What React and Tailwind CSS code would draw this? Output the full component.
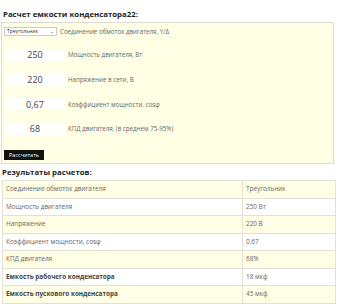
import React, { useState } from 'react';

const rows = [
  ['Соединение обмоток двигателя', 'Треугольник'],
  ['Мощность двигателя', '250 Вт'],
  ['Напряжение', '220 В'],
  ['Коэффициент мощности, cosφ', '0.67'],
  ['КПД двигателя', '68%'],
  ['Емкость рабочего конденсатора', '18 мкф', true],
  ['Емкость пускового конденсатора', '45 мкф', true],
];

const fields = [
  ['250', 'Мощность двигателя, Вт'],
  ['220', 'Напряжение в сети, В'],
  ['0,67', 'Коэффициент мощности, cosφ'],
  ['68', 'КПД двигателя, (в среднем 75-95%)'],
];

export default function App() {
  const [conn, setConn] = useState('Треугольник');

  return (
    <div className="w-[350px] h-[308px] bg-white text-[#333] overflow-hidden" style={{ fontFamily: '"Open Sans", sans-serif' }}>
      <h2 className="pl-[3px] pt-[9px] h-[22px] text-[7.8px] font-bold leading-[10px] text-[#222]">
        Расчет емкости конденсатора22:
      </h2>

      {/* form */}
      <div className="ml-[1px] w-[333px] h-[142px] bg-[#ffffe6] border border-[#dcdcd0] pl-[2px] pt-[4px]">
        <div className="flex items-center gap-[3px] h-[9px]">
          <div className="w-[53px] h-[9px] bg-white border border-[#ccc] flex items-center justify-between px-[2px] text-[5px] text-[#333]">
            <span>{conn}</span>
            <span className="text-[5px] leading-[5px]">⌄</span>
          </div>
          <span className="text-[6.2px] text-[#666]">Соединение обмоток двигателя, Y/Δ</span>
        </div>

        <div className="mt-[13px] flex flex-col gap-[12.7px]">
          {fields.map(([v, l]) => (
            <div key={l} className="flex items-center gap-[3px] h-[12px]">
              <div className="ml-[1px] w-[60px] h-[12px] bg-white flex items-center justify-center text-[9px] text-[#444]">{v}</div>
              <span className="text-[6.2px] text-[#666]">{l}</span>
            </div>
          ))}
        </div>

        <button
          onClick={() => setConn(conn)}
          className="mt-[15px] h-[10px] w-[40px] bg-[#111] text-white text-[5.5px] flex items-center justify-center"
        >
          Рассчитать
        </button>
      </div>

      <h3 className="pl-[2px] pt-[3px] h-[16px] text-[7.8px] font-bold leading-[10px] text-[#222]">
        Результаты расчетов:
      </h3>

      {/* results */}
      <table className="ml-[2px] w-[334px] border-collapse text-[6.4px] text-[#666]">
        <tbody>
          {rows.map(([a, b, bold], i) => (
            <tr key={a} className={`h-[17.5px] ${i % 2 === 0 ? 'bg-[#ffffe6]' : 'bg-white'}`}>
              <td className={`border border-[#e2e2d4] pl-[3px] w-[240px] ${bold ? 'font-bold text-[#444]' : ''}`}>{a}</td>
              <td className="border border-[#e2e2d4] pl-[3px]">{b}</td>
            </tr>
          ))}
        </tbody>
      </table>
    </div>
  );
}
